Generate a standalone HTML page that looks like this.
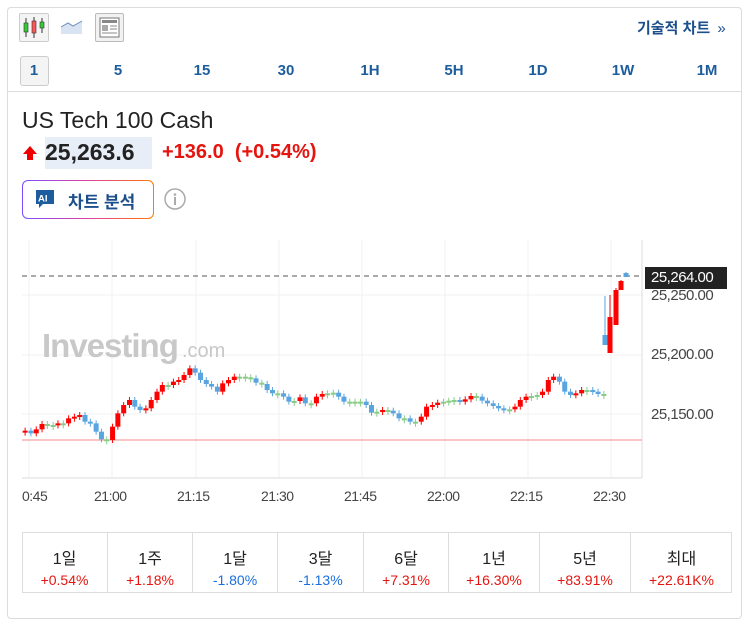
<!DOCTYPE html>
<html><head><meta charset="utf-8"><style>
*{margin:0;padding:0;box-sizing:border-box}
body{width:753px;height:624px;background:#fff;font-family:"Liberation Sans","Noto Sans CJK KR",sans-serif;position:relative;overflow:hidden}
.card{position:absolute;left:7px;top:7px;width:735px;height:612px;border:1px solid #dcdcdc;border-radius:4px}
.a{position:absolute}
.tf{position:absolute;top:62px;font-size:15px;font-weight:bold;color:#1d5d9e;width:40px;text-align:center}
.cell{position:absolute;top:532px;height:61px;border-right:1px solid #ddd;text-align:center}
.cell .t{font-size:16px;color:#222;margin-top:13px}
.cell .v{font-size:14px;margin-top:3px}
.r{color:#e5140e}.b{color:#1a6fe0}
.yl{position:absolute;left:651px;font-size:15px;color:#444;letter-spacing:-0.5px}
.xl{position:absolute;top:488px;font-size:14px;color:#444;letter-spacing:-0.5px}
</style></head><body>
<div class="card"></div>
<div class="a" style="left:19px;top:13px;width:30px;height:29px;border:1px solid #ccc;border-radius:2px;background:#f4f4f4"></div>
<svg class="a" style="left:19px;top:13px" width="30" height="29"><g stroke="#333" stroke-width="1"><line x1="7" y1="5" x2="7" y2="24"/><line x1="15" y1="4" x2="15" y2="25"/><line x1="23" y1="5" x2="23" y2="20"/></g><rect x="5" y="10" width="4" height="9" fill="#3c3" stroke="#333" stroke-width=".6"/><rect x="13" y="8" width="4" height="12" fill="#f55" stroke="#333" stroke-width=".6"/><rect x="21" y="9" width="4" height="6" fill="#3c3" stroke="#333" stroke-width=".6"/></svg>
<svg class="a" style="left:60px;top:17px" width="24" height="18"><path d="M1 10 L8 6 L13 9 L22 4 L22 17 L1 17Z" fill="#d8e4f2"/><path d="M1 10 L8 6 L13 9 L22 4" fill="none" stroke="#6b8cb8" stroke-width="1"/></svg>
<div class="a" style="left:95px;top:13px;width:29px;height:29px;border:1px solid #bbb;border-radius:2px;background:#f2f2f2"></div>
<svg class="a" style="left:95px;top:13px" width="29" height="29"><rect x="5" y="5" width="19" height="19" fill="#fff" stroke="#777"/><rect x="7" y="7" width="15" height="3" fill="#888"/><rect x="7" y="12" width="6" height="6" fill="#aaa"/><g stroke="#888"><line x1="15" y1="13" x2="22" y2="13"/><line x1="15" y1="16" x2="22" y2="16"/><line x1="7" y1="20" x2="22" y2="20"/></g></svg>
<div class="a" style="left:637px;top:17px;font-size:15px;font-weight:bold;color:#1d4f8c">기술적 차트 <span style="font-weight:normal;margin-left:3px">»</span></div>
<div class="a" style="left:20px;top:56px;width:29px;height:30px;border:1px solid #ccc;border-radius:3px;background:#f4f4f4"></div>
<div class="tf" style="left:14px">1</div>
<div class="tf" style="left:98px">5</div>
<div class="tf" style="left:182px">15</div>
<div class="tf" style="left:266px">30</div>
<div class="tf" style="left:350px">1H</div>
<div class="tf" style="left:434px">5H</div>
<div class="tf" style="left:518px">1D</div>
<div class="tf" style="left:603px">1W</div>
<div class="tf" style="left:687px">1M</div>
<div class="a" style="left:8px;top:91px;width:733px;height:1px;background:#ddd"></div>
<div class="a" style="left:22px;top:107px;font-size:23px;color:#222">US Tech 100 Cash</div>
<svg class="a" style="left:22px;top:145px" width="16" height="16"><path d="M8 1 L15 9 L11 9 L11 15 L5 15 L5 9 L1 9Z" fill="#e00"/></svg>
<div class="a" style="left:45px;top:137px;height:32px;width:107px;background:#e8eef8"></div>
<div class="a" style="left:45px;top:139px;font-size:23px;font-weight:bold;color:#222">25,263.6</div>
<div class="a" style="left:162px;top:141px;font-size:20px;font-weight:bold;color:#e5140e">+136.0&nbsp;&nbsp;(+0.54%)</div>
<div class="a" style="left:22px;top:180px;width:132px;height:39px;border-radius:6px;padding:1px;background:linear-gradient(90deg,#7b4bff,#e040a0,#ff7a00)"><div style="width:100%;height:100%;background:#fff;border-radius:5px"></div></div>
<svg class="a" style="left:35px;top:189px" width="20" height="20"><path d="M1 1 H19 V15 H8 L4 19 V15 H1Z" fill="#1d5d9e"/><text x="3" y="12.5" font-size="9.5" font-weight="bold" fill="#fff" font-family="Liberation Sans">AI</text></svg>
<div class="a" style="left:68px;top:188px;font-size:17px;font-weight:bold;color:#1d4f8c">차트 분석</div>
<svg class="a" style="left:163px;top:187px" width="24" height="24"><circle cx="12" cy="12" r="10" fill="none" stroke="#aaa" stroke-width="1.5"/><circle cx="12" cy="7.5" r="1.3" fill="#aaa"/><rect x="11" y="10" width="2" height="8" fill="#aaa"/></svg>
<svg class="a" style="left:0;top:0" width="753" height="624">
<g stroke="#f2f2f2"><line x1="22" y1="295" x2="642" y2="295"/><line x1="22" y1="355" x2="642" y2="355"/><line x1="22" y1="414" x2="642" y2="414"/>
<line x1="29" y1="240" x2="29" y2="478"/><line x1="112" y1="240" x2="112" y2="478"/><line x1="196" y1="240" x2="196" y2="478"/><line x1="279" y1="240" x2="279" y2="478"/><line x1="362" y1="240" x2="362" y2="478"/><line x1="445" y1="240" x2="445" y2="478"/><line x1="528" y1="240" x2="528" y2="478"/><line x1="611" y1="240" x2="611" y2="478"/></g>
<line x1="642" y1="240" x2="642" y2="478" stroke="#ddd"/>
<line x1="22" y1="478" x2="642" y2="478" stroke="#ddd"/>
<line x1="22" y1="440" x2="642" y2="440" stroke="#f8b0b0" stroke-width="1.5"/>
<line x1="22" y1="276" x2="642" y2="276" stroke="#555" stroke-dasharray="5,4"/>
<text x="42" y="357" font-family="Liberation Sans" font-size="33" font-weight="bold" fill="#c8c8c8" letter-spacing="-1">Investing</text>
<text x="182" y="357" font-family="Liberation Sans" font-size="20" fill="#c8c8c8">.com</text>
<g id="cd"></g>
</svg>
<div class="a" style="left:645px;top:267px;width:82px;height:22px;background:#222"></div>
<div class="yl" style="top:269px;color:#fff">25,264.00</div>
<div class="yl" style="top:287px">25,250.00</div>
<div class="yl" style="top:346px">25,200.00</div>
<div class="yl" style="top:406px">25,150.00</div>
<div class="xl" style="left:22px">0:45</div>
<div class="xl" style="left:94px">21:00</div>
<div class="xl" style="left:177px">21:15</div>
<div class="xl" style="left:261px">21:30</div>
<div class="xl" style="left:344px">21:45</div>
<div class="xl" style="left:427px">22:00</div>
<div class="xl" style="left:510px">22:15</div>
<div class="xl" style="left:593px">22:30</div>
<div class="a" style="left:22px;top:532px;width:710px;height:61px;border:1px solid #ddd"></div>
<div class="cell" style="left:22px;width:86px"><div class="t">1일</div><div class="v r">+0.54%</div></div>
<div class="cell" style="left:108px;width:85px"><div class="t">1주</div><div class="v r">+1.18%</div></div>
<div class="cell" style="left:193px;width:85px"><div class="t">1달</div><div class="v b">-1.80%</div></div>
<div class="cell" style="left:278px;width:86px"><div class="t">3달</div><div class="v b">-1.13%</div></div>
<div class="cell" style="left:364px;width:85px"><div class="t">6달</div><div class="v r">+7.31%</div></div>
<div class="cell" style="left:449px;width:91px"><div class="t">1년</div><div class="v r">+16.30%</div></div>
<div class="cell" style="left:540px;width:91px"><div class="t">5년</div><div class="v r">+83.91%</div></div>
<div class="cell" style="left:631px;width:101px;border-right:none"><div class="t">최대</div><div class="v r">+22.61K%</div></div>
<script>
var d=[52,572,64,580,75,568,87,552,98,555,110,555,120,550,131,550,142,535,154,530,165,525,176,545,187,550,199,575,210,598,221,600,233,560,244,520,256,495,268,480,279,500,290,510,302,505,313,480,325,455,336,435,348,435,359,425,370,420,381,405,393,385,404,398,415,420,427,432,438,440,450,455,461,430,473,420,485,410,496,410,508,412,519,415,530,428,542,432,553,450,564,460,575,460,587,470,598,485,609,483,621,472,632,490,644,490,655,470,667,462,678,460,690,458,701,470,712,485,724,488,735,485,746,485,758,495,769,518,780,515,792,510,803,512,814,520,826,535,837,535,849,545,860,545,872,530,883,500,895,495,906,488,918,485,929,482,940,480,952,485,963,478,975,468,986,470,998,482,1009,490,1021,498,1032,505,1043,510,1055,508,1066,500,1077,480,1089,470,1100,468,1112,465,1123,455,1135,420,1146,410,1158,425,1169,455,1181,465,1192,460,1204,450,1215,450,1227,455,1238,462,1250,462];
var g=document.getElementById('cd'),s='',p=240+578/3;
for(var i=0;i<d.length;i+=2){var x=d[i]/2.07,c=240+d[i+1]/3,o=p;var up=c<o;var col=up?'#f00':'#5aa5e0';if(Math.abs(c-o)<1.5)col='#8c8';
var t=Math.min(o,c),h=Math.max(2,Math.abs(c-o));
s+='<line x1="'+x+'" y1="'+(t-3)+'" x2="'+x+'" y2="'+(t+h+3)+'" stroke="'+col+'"/><rect x="'+(x-2.5)+'" y="'+t+'" width="5" height="'+h+'" fill="'+col+'"/>';p=c;}
var sp=[[605,335,345,'#5aa5e0',296,345],[610,317,353,'#f00',295,353],[616,290,325,'#f00',288,325],[621,281,290,'#f00',280,290],[626,273,277,'#5aa5e0',272,277]];
sp.forEach(function(k){s+='<line x1="'+k[0]+'" y1="'+k[4]+'" x2="'+k[0]+'" y2="'+k[5]+'" stroke="'+k[3]+'"/><rect x="'+(k[0]-2.5)+'" y="'+k[1]+'" width="5" height="'+(k[2]-k[1])+'" fill="'+k[3]+'"/>';});
g.innerHTML=s;
</script>
</body></html>
